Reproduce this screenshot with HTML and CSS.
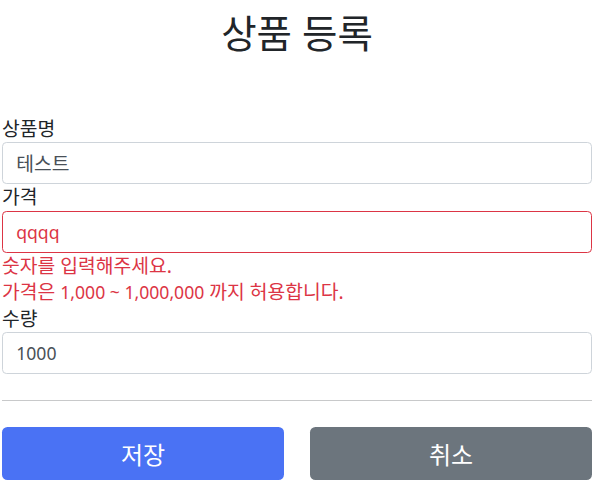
FILE: index.html
```html
<!DOCTYPE html>
<html lang="ko">
<head>
<meta charset="utf-8">
<link rel="stylesheet" href="styles.css">
</head>
<body>
<div class="container">
  <h2 class="title">상품 등록</h2>
  <form class="form">
    <label class="label" for="itemName">상품명</label>
    <input class="input input-ko" id="itemName" type="text" value="테스트">
    <label class="label" for="price">가격</label>
    <input class="input input-error" id="price" type="text" value="qqqq">
    <div class="feedback">숫자를 입력해주세요.</div>
    <div class="feedback">가격은 <span class="latin">1,000 ~ 1,000,000</span> 까지 허용합니다.</div>
    <label class="label" for="quantity">수량</label>
    <input class="input" id="quantity" type="text" value="1000">
    <hr class="divider">
    <div class="actions">
      <button class="btn btn-primary" type="submit">저장</button>
      <button class="btn btn-secondary" type="button">취소</button>
    </div>
  </form>
</div>
</body>
</html>
```

FILE: styles.css
```css
* { box-sizing: border-box; }

html, body {
  margin: 0;
  padding: 0;
  background: #fff;
}

body {
  font-family: "Noto Sans", "Noto Sans CJK KR", sans-serif;
  font-size: 17.6px;
  line-height: 26.4px;
  color: #212529;
}

.container {
  padding: 0 2px;
}

.title {
  margin: 12px 0 62px;
  height: 42px;
  font-size: 38.5px;
  font-weight: 400;
  line-height: 42px;
  text-align: center;
}

.form {
  display: flex;
  flex-direction: column;
}

.label {
  display: block;
  height: 26.4px;
  font-size: 19.3px;
  line-height: 26.4px;
}

.input {
  display: block;
  width: 100%;
  height: 42px;
  padding: 0 13.2px;
  font-family: inherit;
  font-size: 17.6px;
  color: #495057;
  background: #fff;
  border: 1px solid #ced4da;
  border-radius: 4.4px;
  outline: none;
}

.input-ko {
  font-size: 19.3px;
}

.input-error {
  border-color: #dc3545;
  color: #dc3545;
}

.feedback {
  height: 26.4px;
  color: #dc3545;
  font-size: 19.3px;
  line-height: 26.4px;
}

.latin {
  font-size: 17.6px;
}

.divider {
  width: 100%;
  margin: 26px 0;
  border: 0;
  border-top: 1px solid #c8c9ca;
}

.actions {
  display: grid;
  grid-template-columns: 1fr 1fr;
  gap: 26px;
}

.btn {
  height: 53px;
  font-family: inherit;
  font-size: 24px;
  color: #fff;
  border: 0;
  border-radius: 5.5px;
  cursor: pointer;
}

.btn-primary { background: #4a72f4; }
.btn-secondary { background: #6c757d; }
```
